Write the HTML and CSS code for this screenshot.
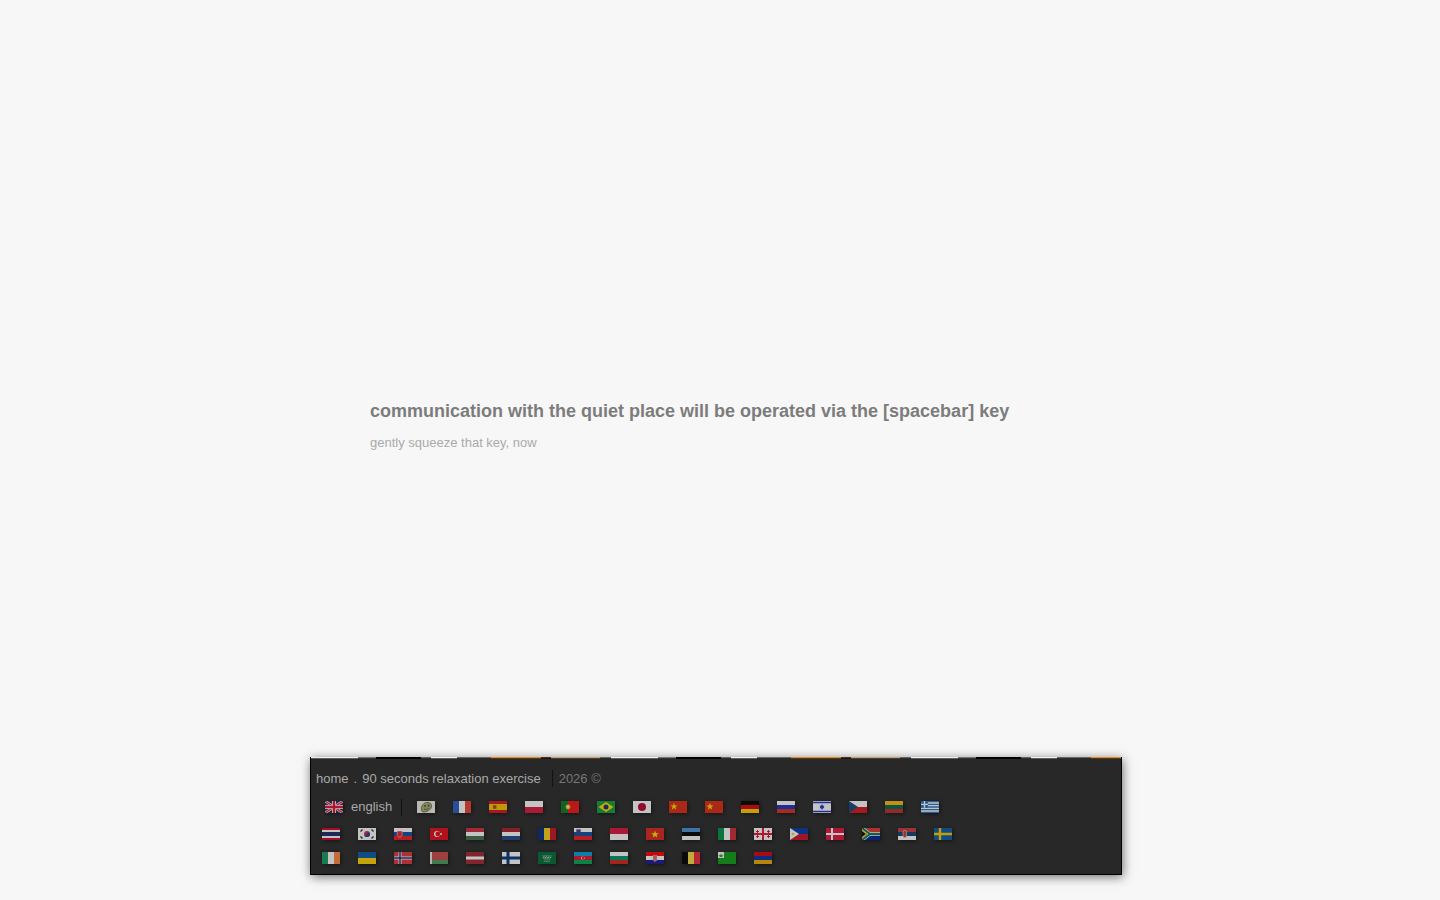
FILE: index.html
```html
<!DOCTYPE html>
<html lang="en">

<head>
    <meta charset="UTF-8">
    <meta name="viewport" content="width=device-width, initial-scale=1.0">
    <title>the quiet place</title>
    <link rel="stylesheet" href="styles.css">
</head>

<body>

    <main class="stage">
        <h1>communication with the quiet place will be operated via the [spacebar] key</h1>
        <p>gently squeeze that key, now</p>
    </main>

    <footer class="panel">
        <div class="strip"></div>

        <nav class="links">
            <a href="#">home</a>
            <span class="dot">.</span>
            <a href="#">90 seconds relaxation exercise</a>
            <span class="sep"></span>
            <span class="year">2026 &copy;</span>
        </nav>

        <div class="flags flags-first">
            <a href="#" class="current">
                <svg class="flag" viewBox="0 0 18 12"><rect width="18" height="12" fill="#1b2a6b"/><path d="M0 0 18 12M18 0 0 12" stroke="#fff" stroke-width="2.6"/><path d="M0 0 18 12M18 0 0 12" stroke="#e0102e" stroke-width="1.200"/><path d="M9 0V12M0 6H18" stroke="#fff" stroke-width="4"/><path d="M9 0V12M0 6H18" stroke="#e0102e" stroke-width="2.400"/></svg>
                <span>english</span>
            </a>
            <span class="sep sep-flags"></span>
            <div class="flag-list">
                <a href="#"><svg class="flag" viewBox="0 0 18 12"><rect width="18" height="12" fill="#f2f2e6"/><path d="M5 10.5C3.500 7 5 2 9.500 1.500 14 1 15.500 4 14 7 12.500 10 8 12 5 10.500Z" fill="#a8ad6e" stroke="#5f6238" stroke-width=".8"/><circle cx="8" cy="5" r=".9" fill="#444"/><circle cx="11.500" cy="4.500" r=".9" fill="#444"/><path d="M7 8C8.500 9 10.500 8.500 12 6.800" fill="none" stroke="#444" stroke-width=".8"/></svg></a>
                <a href="#"><svg class="flag" viewBox="0 0 18 12"><rect width="18" height="12" fill="#fff"/><rect width="6" height="12" fill="#2b5cc4"/><rect x="12" width="6" height="12" fill="#e8402f"/></svg></a>
                <a href="#"><svg class="flag" viewBox="0 0 18 12"><rect width="18" height="12" fill="#d4161c"/><rect y="3" width="18" height="6" fill="#fbc400"/><rect x="4" y="4.200" width="3.400" height="3.600" fill="#a8501c"/></svg></a>
                <a href="#"><svg class="flag" viewBox="0 0 18 12"><rect width="18" height="12" fill="#fff"/><rect y="6" width="18" height="6" fill="#dc143c"/></svg></a>
                <a href="#"><svg class="flag" viewBox="0 0 18 12"><rect width="18" height="12" fill="#f01414"/><rect width="7" height="12" fill="#0a7a1e"/><circle cx="7" cy="6" r="2.400" fill="#f4c430"/><circle cx="7" cy="6" r="1.200" fill="#e8e8e8"/></svg></a>
                <a href="#"><svg class="flag" viewBox="0 0 18 12"><rect width="18" height="12" fill="#0f9d3a"/><path d="M9 1 16.500 6 9 11 1.500 6Z" fill="#fedf00"/><circle cx="9" cy="6" r="2.500" fill="#1b2a78"/></svg></a>
                <a href="#"><svg class="flag" viewBox="0 0 18 12"><rect width="18" height="12" fill="#fff"/><circle cx="9" cy="6" r="4" fill="#bc002d"/></svg></a>
                <a href="#"><svg class="flag" viewBox="0 0 18 12"><rect width="18" height="12" fill="#de2910"/><path d="M5 1.800 5.900 4.500H8.700L6.400 6.100 7.300 8.800 5 7.100 2.700 8.800 3.600 6.100 1.300 4.500H4.100Z" fill="#ffde00"/></svg></a>
                <a href="#"><svg class="flag" viewBox="0 0 18 12"><rect width="18" height="12" fill="#de2910"/><path d="M5 1.800 5.900 4.500H8.700L6.400 6.100 7.300 8.800 5 7.100 2.700 8.800 3.600 6.100 1.300 4.500H4.100Z" fill="#ffde00"/></svg></a>
                <a href="#"><svg class="flag" viewBox="0 0 18 12"><rect width="18" height="12" fill="#000"/><rect y="4" width="18" height="4" fill="#dd0000"/><rect y="8" width="18" height="4" fill="#ffce00"/></svg></a>
                <a href="#"><svg class="flag" viewBox="0 0 18 12"><rect width="18" height="12" fill="#fff"/><rect y="4" width="18" height="4" fill="#1c2fc4"/><rect y="8" width="18" height="4" fill="#d52b1e"/></svg></a>
                <a href="#"><svg class="flag" viewBox="0 0 18 12"><rect width="18" height="12" fill="#fff"/><path d="M0 1.500H18M0 10.500H18" stroke="#1c34c8" stroke-width="1.300"/><path d="M9 3 11.400 7.200H6.600ZM9 9 6.600 4.800H11.400Z" fill="#1c34c8"/></svg></a>
                <a href="#"><svg class="flag" viewBox="0 0 18 12"><rect width="18" height="12" fill="#fff"/><rect y="6" width="18" height="6" fill="#d7141a"/><path d="M0 0 9 6 0 12Z" fill="#11457e"/></svg></a>
                <a href="#"><svg class="flag" viewBox="0 0 18 12"><rect width="18" height="12" fill="#fdb913"/><rect y="4" width="18" height="4" fill="#006a44"/><rect y="8" width="18" height="4" fill="#c1272d"/></svg></a>
                <a href="#"><svg class="flag" viewBox="0 0 18 12"><rect width="18" height="12" fill="#fff"/><path d="M0 .700H18M0 3.300H18M0 6H18M0 8.700H18M0 11.300H18" stroke="#2a6fc0" stroke-width="1.300"/><rect width="7" height="6.700" fill="#2a6fc0"/><path d="M3.500 0V6.700M0 3.300H7" stroke="#fff" stroke-width="1.300"/></svg></a>
            </div>
        </div>

        <div class="flags flags-rest">
            <a href="#"><svg class="flag" viewBox="0 0 18 12"><rect width="18" height="12" fill="#d80027"/><rect y="2" width="18" height="8" fill="#fff"/><rect y="4" width="18" height="4" fill="#1b2a6b"/></svg></a>
            <a href="#"><svg class="flag" viewBox="0 0 18 12"><rect width="18" height="12" fill="#fff"/><circle cx="9" cy="6" r="3" fill="#cd2e3a"/><path d="M6 6A3 3 0 0 0 12 6 1.500 1.500 0 0 0 9 6 1.500 1.500 0 0 1 6 6Z" fill="#0047a0"/><path d="M2.500 3.500 4.500 1.500M13.500 1.500 15.500 3.500M2.500 8.500 4.500 10.500M13.500 10.500 15.500 8.500" stroke="#222" stroke-width="1.200"/></svg></a>
            <a href="#"><svg class="flag" viewBox="0 0 18 12"><rect width="18" height="12" fill="#fff"/><rect y="4" width="18" height="4" fill="#0b4ea2"/><rect y="8" width="18" height="4" fill="#ee1c25"/><path d="M3.200 3H8.200V6.500C8.200 8 6.500 9 5.700 9.300 4.900 9 3.200 8 3.200 6.500Z" fill="#ee1c25" stroke="#fff" stroke-width=".5"/></svg></a>
            <a href="#"><svg class="flag" viewBox="0 0 18 12"><rect width="18" height="12" fill="#e30a17"/><circle cx="7" cy="6" r="3" fill="#fff"/><circle cx="7.800" cy="6" r="2.400" fill="#e30a17"/><circle cx="11" cy="6" r="1" fill="#fff"/></svg></a>
            <a href="#"><svg class="flag" viewBox="0 0 18 12"><rect width="18" height="12" fill="#cd2a3e"/><rect y="4" width="18" height="4" fill="#fff"/><rect y="8" width="18" height="4" fill="#436f4d"/></svg></a>
            <a href="#"><svg class="flag" viewBox="0 0 18 12"><rect width="18" height="12" fill="#ae1c28"/><rect y="4" width="18" height="4" fill="#fff"/><rect y="8" width="18" height="4" fill="#21468b"/></svg></a>
            <a href="#"><svg class="flag" viewBox="0 0 18 12"><rect width="18" height="12" fill="#002b7f"/><rect x="6" width="6" height="12" fill="#fcd116"/><rect x="12" width="6" height="12" fill="#ce1126"/></svg></a>
            <a href="#"><svg class="flag" viewBox="0 0 18 12"><rect width="18" height="12" fill="#fff"/><rect y="4" width="18" height="4" fill="#0b4ea2"/><rect y="8" width="18" height="4" fill="#ee1c25"/><path d="M2.500 1.500H6.500V4C6.500 5 5 5.700 4.500 6 4 5.700 2.500 5 2.500 4Z" fill="#0b4ea2" stroke="#ee1c25" stroke-width=".4"/></svg></a>
            <a href="#"><svg class="flag" viewBox="0 0 18 12"><rect width="18" height="12" fill="#fff"/><rect width="18" height="6" fill="#dc143c"/></svg></a>
            <a href="#"><svg class="flag" viewBox="0 0 18 12"><rect width="18" height="12" fill="#da251d"/><path d="M9 2.400 10 5.200H12.900L10.600 7 11.400 9.800 9 8.100 6.600 9.800 7.400 7 5.100 5.200H8Z" fill="#ffe400"/></svg></a>
            <a href="#"><svg class="flag" viewBox="0 0 18 12"><rect width="18" height="12" fill="#4a90d9"/><rect y="4" width="18" height="4" fill="#000"/><rect y="8" width="18" height="4" fill="#fff"/></svg></a>
            <a href="#"><svg class="flag" viewBox="0 0 18 12"><rect width="18" height="12" fill="#fff"/><rect width="6" height="12" fill="#009246"/><rect x="12" width="6" height="12" fill="#ce2b37"/></svg></a>
            <a href="#"><svg class="flag" viewBox="0 0 18 12"><rect width="18" height="12" fill="#fff"/><path d="M9 0V12M0 6H18" stroke="#e8112d" stroke-width="2"/><path d="M3.500 2V5M2 3.500H5M14.500 2V5M13 3.500H16M3.500 7V10M2 8.500H5M14.500 7V10M13 8.500H16" stroke="#e8112d" stroke-width="1"/></svg></a>
            <a href="#"><svg class="flag" viewBox="0 0 18 12"><rect width="18" height="6" fill="#0038a8"/><rect y="6" width="18" height="6" fill="#ce1126"/><path d="M0 0 9 6 0 12Z" fill="#fff"/><circle cx="3" cy="6" r="1.300" fill="#fcd116"/></svg></a>
            <a href="#"><svg class="flag" viewBox="0 0 18 12"><rect width="18" height="12" fill="#e2133a"/><path d="M6 0V12M0 6H18" stroke="#fff" stroke-width="2"/></svg></a>
            <a href="#"><svg class="flag" viewBox="0 0 18 12"><rect width="18" height="6" fill="#de3831"/><rect y="6" width="18" height="6" fill="#002395"/><path d="M0 0 8 6H18M0 12 8 6" fill="none" stroke="#fff" stroke-width="3.400"/><path d="M0 0 8 6H18M0 12 8 6" fill="none" stroke="#007a4d" stroke-width="2"/><path d="M0 1.800 5.500 6 0 10.200Z" fill="#ffb612"/><path d="M0 3.200 3.700 6 0 8.800Z" fill="#000"/></svg></a>
            <a href="#"><svg class="flag" viewBox="0 0 18 12"><rect width="18" height="12" fill="#c6363c"/><rect y="4" width="18" height="4" fill="#0c4076"/><rect y="8" width="18" height="4" fill="#fff"/><rect x="5" y="2.500" width="3.500" height="7" rx="1.500" fill="#c6363c" stroke="#eadfc8" stroke-width=".6"/></svg></a>
            <a href="#"><svg class="flag" viewBox="0 0 18 12"><rect width="18" height="12" fill="#0a5ba8"/><path d="M6 0V12M0 6H18" stroke="#fecc00" stroke-width="2.400"/></svg></a>
        </div>

        <div class="flags flags-rest">
            <a href="#"><svg class="flag" viewBox="0 0 18 12"><rect width="18" height="12" fill="#fff"/><rect width="6" height="12" fill="#169b62"/><rect x="12" width="6" height="12" fill="#ff883e"/></svg></a>
            <a href="#"><svg class="flag" viewBox="0 0 18 12"><rect width="18" height="6" fill="#0a5ba8"/><rect y="6" width="18" height="6" fill="#ffd500"/></svg></a>
            <a href="#"><svg class="flag" viewBox="0 0 18 12"><rect width="18" height="12" fill="#e0343c"/><path d="M6 0V12M0 6H18" stroke="#fff" stroke-width="3"/><path d="M6 0V12M0 6H18" stroke="#1b2a6b" stroke-width="1.500"/></svg></a>
            <a href="#"><svg class="flag" viewBox="0 0 18 12"><rect width="18" height="8" fill="#ce4a4a"/><rect y="8" width="18" height="4" fill="#4e9a5a"/><rect width="2" height="12" fill="#f0e6e0"/></svg></a>
            <a href="#"><svg class="flag" viewBox="0 0 18 12"><rect width="18" height="12" fill="#a4232e"/><rect y="4.500" width="18" height="3" fill="#fff"/></svg></a>
            <a href="#"><svg class="flag" viewBox="0 0 18 12"><rect width="18" height="12" fill="#fff"/><path d="M6 0V12M0 6H18" stroke="#003580" stroke-width="3"/></svg></a>
            <a href="#"><svg class="flag" viewBox="0 0 18 12"><rect width="18" height="12" fill="#006c35"/><path d="M4.500 4H13.500M5 5.500H13M5.500 7H12.500" stroke="#e6efe8" stroke-width=".8" stroke-dasharray="1.200 .5"/><path d="M6 9.200H12" stroke="#e6efe8" stroke-width=".5"/></svg></a>
            <a href="#"><svg class="flag" viewBox="0 0 18 12"><rect width="18" height="12" fill="#e8112d"/><rect width="18" height="4" fill="#00a3e0"/><rect y="8" width="18" height="4" fill="#00a651"/><circle cx="8.500" cy="6" r="1.500" fill="#fff"/><circle cx="9" cy="6" r="1.200" fill="#e8112d"/><circle cx="10.500" cy="6" r=".6" fill="#fff"/></svg></a>
            <a href="#"><svg class="flag" viewBox="0 0 18 12"><rect width="18" height="12" fill="#fff"/><rect y="4" width="18" height="4" fill="#00966e"/><rect y="8" width="18" height="4" fill="#d62612"/></svg></a>
            <a href="#"><svg class="flag" viewBox="0 0 18 12"><rect width="18" height="12" fill="#ff0000"/><rect y="4" width="18" height="4" fill="#fff"/><rect y="8" width="18" height="4" fill="#171796"/><path d="M7 3.500H11V7.500C11 8.500 9.500 9.300 9 9.500 8.500 9.300 7 8.500 7 7.500Z" fill="#e06a6a" stroke="#ddd" stroke-width=".4"/></svg></a>
            <a href="#"><svg class="flag" viewBox="0 0 18 12"><rect width="6" height="12" fill="#000"/><rect x="6" width="6" height="12" fill="#fae042"/><rect x="12" width="6" height="12" fill="#ed2939"/></svg></a>
            <a href="#"><svg class="flag" viewBox="0 0 18 12"><rect width="18" height="12" fill="#0f9d18"/><rect width="6" height="6" fill="#fff"/><path d="M3 1.200 3.700 3.300H5.700L4.100 4.400 4.700 5.500 3 4.800 1.300 5.500 1.900 4.400.3 3.300H2.300Z" fill="#0f9d18"/></svg></a>
            <a href="#"><svg class="flag" viewBox="0 0 18 12"><rect width="18" height="12" fill="#d90012"/><rect y="4" width="18" height="4" fill="#0033a0"/><rect y="8" width="18" height="4" fill="#f2a800"/></svg></a>
        </div>
    </footer>

</body>

</html>
```

FILE: styles.css
```css
html,
body {
    margin: 0;
    height: 100%;
}

body {
    font-family: "Liberation Sans", Arial, sans-serif;
    background-color: #f7f7f7;
    display: flex;
    flex-direction: column;
    overflow: hidden;
}

a {
    color: inherit;
    text-decoration: none;
}

.stage {
    height: 757px;
    box-sizing: border-box;
    padding: 401px 0 0 370px;
}

.stage h1 {
    margin: 0;
    font-size: 18px;
    line-height: 21px;
    font-weight: bold;
    color: #7c7c7c;
}

.stage p {
    margin: 12px 0 0;
    font-size: 13px;
    line-height: 17px;
    color: #aaa;
}

.panel {
    width: 812px;
    height: 118px;
    margin-left: 310px;
    box-sizing: border-box;
    background-color: #282828;
    border: 1px solid #000;
    border-top: none;
    box-shadow: 1px 2px 10px rgba(0, 0, 0, 0.55);
    color: #aaa;
    font-size: 13px;
}

.strip {
    height: 2px;
    background-image: linear-gradient(transparent 1px, rgba(0, 0, 0, 0.6) 1px),
        repeating-linear-gradient(90deg,
            #eee 0, #eee 47px,
            #777 47px, #777 65px,
            #000 65px, #000 110px,
            #666 110px, #666 120px,
            #eee 120px, #eee 146px,
            #666 146px, #666 180px,
            #e08a28 180px, #e08a28 230px,
            #4a3020 230px, #4a3020 240px,
            #c8a070 240px, #c8a070 289px,
            #666 289px, #666 300px);
}

.links {
    display: flex;
    align-items: center;
    height: 18px;
    margin-top: 10px;
    padding-left: 5px;
}

.dot {
    margin: 0 5px;
}

.links .sep {
    margin: 0 6px 0 11px;
}

.sep {
    width: 1px;
    height: 17px;
    background-color: #111;
}

.year {
    color: #777;
}

.flags {
    display: flex;
    align-items: center;
}

.flags-first {
    margin-top: 11px;
    height: 18px;
    padding-left: 14px;
}

.current {
    display: flex;
    align-items: center;
    gap: 8px;
}

.current span {
    padding-bottom: 2px;
}

.sep-flags {
    margin: 0 15px 0 9px;
}

.flag-list {
    display: flex;
    gap: 18px;
}

.flags-rest {
    margin-top: 9px;
    height: 15px;
    padding-left: 11px;
    gap: 18px;
}

.flags-first + .flags-rest {
    margin-top: 10px;
}

.flag {
    display: block;
    width: 18px;
    height: 12px;
    opacity: 0.72;
    filter: blur(0.3px);
    box-shadow: 1px 1px 4px rgba(0, 0, 0, 0.7);
}

.flag-list a,
.flags-rest a {
    display: block;
}
```
